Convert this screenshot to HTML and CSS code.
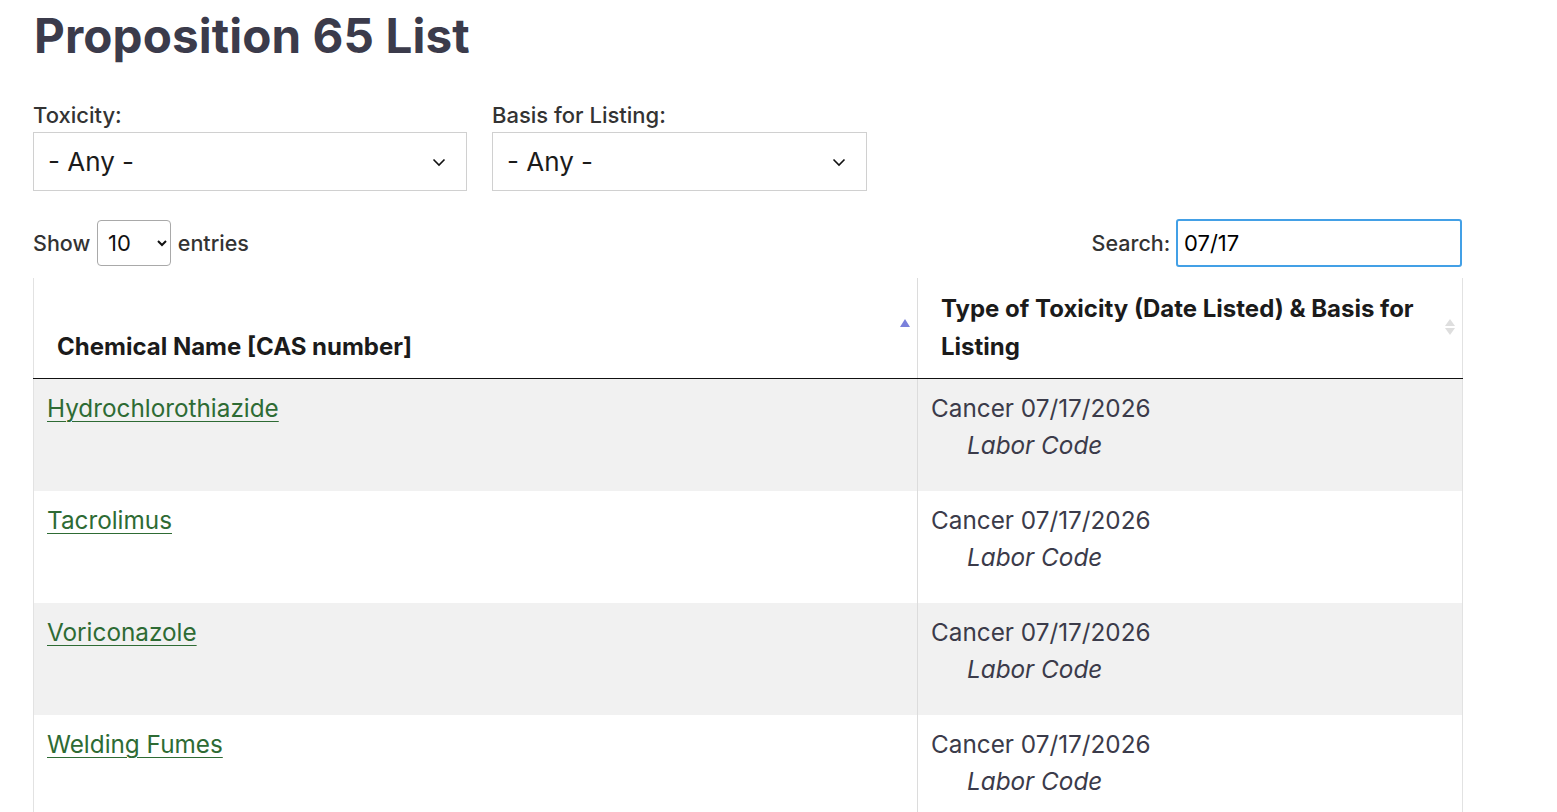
FILE: index.html
```html
<!DOCTYPE html>
<html lang="en">
<head>
  <meta charset="UTF-8">
  <title>Proposition 65 List</title>
  <link rel="stylesheet" href="styles.css">
</head>
<body>

  <div class="page">
    <h1>Proposition 65 List</h1>

    <div class="filters">
      <div class="filter">
        <label for="toxicity">Toxicity:</label>
        <div class="select-wrap tox-select">
          <select id="toxicity" class="filter-select">
            <option>- Any -</option>
          </select>
          <svg class="chevron" width="14" height="9" viewBox="0 0 14 9"><polyline points="1.5,1.5 7,7 12.5,1.5" fill="none" stroke="#111" stroke-width="1.6"/></svg>
        </div>
      </div>
      <div class="filter">
        <label for="basis">Basis for Listing:</label>
        <div class="select-wrap basis-select">
          <select id="basis" class="filter-select">
            <option>- Any -</option>
          </select>
          <svg class="chevron" width="14" height="9" viewBox="0 0 14 9"><polyline points="1.5,1.5 7,7 12.5,1.5" fill="none" stroke="#111" stroke-width="1.6"/></svg>
        </div>
      </div>
    </div>

    <div class="table-controls">
      <div class="length">
        Show
        <select class="length-select">
          <option>10</option>
          <option>25</option>
          <option>50</option>
        </select>
        entries
      </div>
      <div class="search">
        Search: <input type="text" class="search-input" value="07/17">
      </div>
    </div>

    <table class="chem-table">
      <thead>
        <tr>
          <th class="col-name sort-asc">Chemical Name [CAS number]</th>
          <th class="col-tox sortable">Type of Toxicity (Date Listed) &amp; Basis for Listing</th>
        </tr>
      </thead>
      <tbody>
        <tr class="odd">
          <td><a href="#">Hydrochlorothiazide</a></td>
          <td>Cancer 07/17/2026<br><em>Labor Code</em></td>
        </tr>
        <tr class="even">
          <td><a href="#">Tacrolimus</a></td>
          <td>Cancer 07/17/2026<br><em>Labor Code</em></td>
        </tr>
        <tr class="odd">
          <td><a href="#">Voriconazole</a></td>
          <td>Cancer 07/17/2026<br><em>Labor Code</em></td>
        </tr>
        <tr class="even">
          <td><a href="#">Welding Fumes</a></td>
          <td>Cancer 07/17/2026<br><em>Labor Code</em></td>
        </tr>
      </tbody>
    </table>
  </div>

</body>
</html>
```

FILE: styles.css
```css
body {
  margin: 0;
  font-family: "Inter", "Liberation Sans", sans-serif;
  color: #3b3b4a;
  background: #fff;
}

.page {
  padding: 0 33px;
}

h1 {
  margin: 6px 0 0 1px;
  font-size: 47.6px;
  font-weight: 700;
  line-height: 60px;
  color: #3b3b4b;
  letter-spacing: 0.1px;
}

.filters {
  display: flex;
  gap: 25px;
  margin-top: 35px;
}

.filter {
  display: flex;
  flex-direction: column;
}

.filter label {
  font-size: 22px;
  font-weight: 500;
  color: #333;
  line-height: 28px;
  margin-bottom: 3px;
}

.select-wrap {
  position: relative;
}

.filter-select {
  appearance: none;
  width: 100%;
  height: 59px;
  padding: 0 14px;
  font-family: inherit;
  font-size: 26px;
  color: #1b1b1b;
  background: #fff;
  border: 1px solid #d0d0d0;
  border-radius: 0;
}

.chevron {
  position: absolute;
  right: 21px;
  top: 26px;
  pointer-events: none;
}

.tox-select {
  width: 434px;
}

.basis-select {
  width: 375px;
}

.table-controls {
  display: flex;
  justify-content: space-between;
  align-items: center;
  width: 1429px;
  margin-top: 28px;
  font-size: 21.5px;
  font-weight: 500;
  color: #333;
}

.length-select {
  width: 74px;
  height: 46px;
  margin: 0 1px;
  padding: 0 6px;
  font-family: inherit;
  font-size: 22px;
  color: #111;
  background: #fff;
  border: 1px solid #a9a9a9;
  border-radius: 4px;
}

.search-input {
  width: 286px;
  height: 48px;
  box-sizing: border-box;
  padding: 0 6px;
  font-family: inherit;
  font-size: 22px;
  color: #000;
  border: 2px solid #43a0e6;
  border-radius: 3px;
  outline: none;
}

.chem-table {
  width: 1430px;
  margin-top: 11px;
  border-collapse: collapse;
  border-left: 1px solid #e2e2e2;
  border-right: 1px solid #e2e2e2;
}

.chem-table th {
  position: relative;
  height: 100px;
  box-sizing: border-box;
  padding: 10px 40px 12px 23px;
  text-align: left;
  vertical-align: bottom;
  font-size: 24px;
  font-weight: 700;
  line-height: 38px;
  color: #1b1b1b;
  border-bottom: 1px solid #111;
}

.chem-table .col-name {
  width: 884px;
  border-right: 1px solid #dcdcdc;
}

/* sort arrows drawn with borders */
.sort-asc::after {
  content: "";
  position: absolute;
  right: 7px;
  top: 41px;
  border-left: 5px solid transparent;
  border-right: 5px solid transparent;
  border-bottom: 8px solid #7a80db;
}

.sortable::before,
.sortable::after {
  content: "";
  position: absolute;
  right: 7px;
  border-left: 5px solid transparent;
  border-right: 5px solid transparent;
}

.sortable::before {
  top: 41px;
  border-bottom: 7px solid #dedede;
}

.sortable::after {
  top: 50px;
  border-top: 7px solid #dedede;
}

.chem-table td {
  height: 112px;
  box-sizing: border-box;
  padding: 11px 13px 27px;
  vertical-align: top;
  font-size: 24.3px;
  line-height: 37px;
  color: #3b3b4a;
}

.chem-table td:first-child {
  border-right: 1px solid #dcdcdc;
}

.chem-table tr.odd td {
  background: #f1f1f1;
}

.chem-table em {
  margin-left: 36px;
}

.chem-table a {
  color: #2e6b34;
  text-decoration: underline;
  text-underline-offset: 4px;
  text-decoration-thickness: 1px;
}
```
